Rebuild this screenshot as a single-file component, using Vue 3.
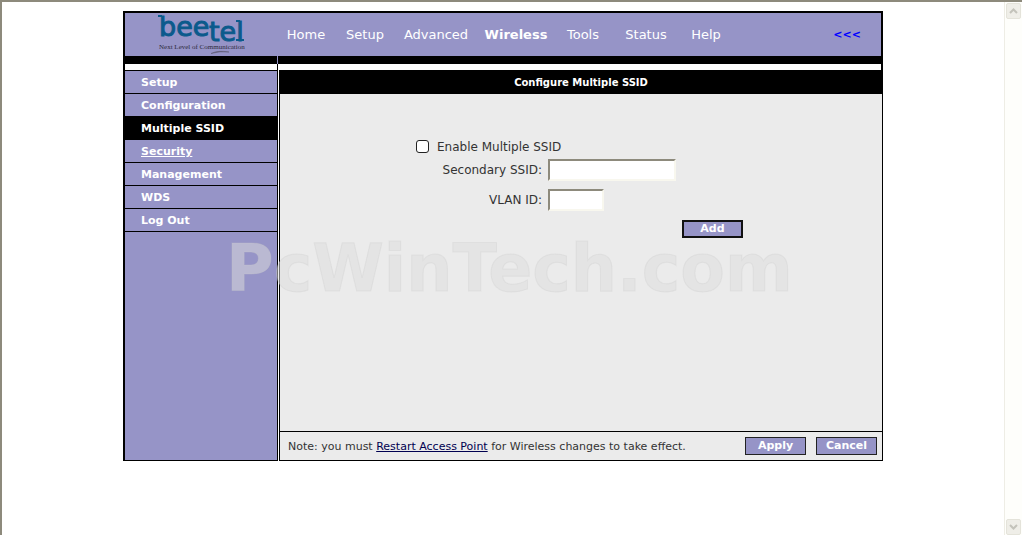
<script setup>
import { ref } from 'vue'

const tabs = ['Home', 'Setup', 'Advanced', 'Wireless', 'Tools', 'Status', 'Help']
const activeTab = 'Wireless'
const sections = ['Setup', 'Configuration', 'Multiple SSID', 'Security', 'Management', 'WDS', 'Log Out']
const activeSection = 'Multiple SSID'
const hoveredSection = 'Security'

const enabled = ref(false)
const ssid = ref('')
const vlan = ref('')
</script>

<template>
  <div class="window">
    <div class="page">
      <div class="router">
        <header class="header">
          <div class="brand">
            <svg class="logo" viewBox="0 0 90 42" role="img" aria-label="beetel, Next Level of Communication">
              <g class="wordmark">
                <text x="1" y="22">bee</text>
                <text x="51" y="27">tel</text>
              </g>
              <g fill="#0b5a8c">
                <rect x="0" y="1" width="4" height="2" />
                <rect x="78" y="6" width="4" height="2" />
                <rect x="78" y="25" width="8" height="2" />
              </g>
              <text class="slogan" x="1" y="35">Next Level of Communication</text>
              <path d="M53 39.500Q60 36 71 38Q61 37 53 39.500Z" fill="#5d5870" stroke="#5d5870" stroke-width=".5" />
            </svg>
          </div>
          <nav class="tabs">
            <a v-for="tab in tabs" :key="tab" href="#" :class="{ active: tab === activeTab }">{{ tab }}</a>
          </nav>
          <a class="back" href="#">&lt;&lt;&lt;</a>
        </header>
        <div class="strip"><span class="strip-mark"></span></div>
        <div class="gap"><span class="gap-mark"></span></div>
        <div class="columns">
          <nav class="side">
            <a
              v-for="item in sections"
              :key="item"
              href="#"
              :class="{ active: item === activeSection, hovered: item === hoveredSection }"
            >{{ item }}</a>
          </nav>
          <main class="main">
            <h1>Configure Multiple SSID</h1>
            <div class="panel">
              <form class="form" @submit.prevent>
                <div class="check">
                  <input id="enable" v-model="enabled" type="checkbox">
                  <label for="enable">Enable Multiple SSID</label>
                </div>
                <div class="field">
                  <label for="ssid">Secondary SSID:</label>
                  <input id="ssid" v-model="ssid" class="long" type="text">
                </div>
                <div class="field">
                  <label for="vlan">VLAN ID:</label>
                  <input id="vlan" v-model="vlan" class="short" type="text">
                </div>
                <button class="btn add" type="submit">Add</button>
              </form>
            </div>
            <footer class="footer">
              <p>Note: you must <a href="#">Restart Access Point</a> for Wireless changes to take effect.</p>
              <button class="btn" type="button">Apply</button>
              <button class="btn" type="button">Cancel</button>
            </footer>
          </main>
        </div>
        <div class="watermark">PcWinTech.com</div>
      </div>
    </div>
    <div class="scrollbar">
      <button type="button" aria-label="Scroll up">
        <svg viewBox="0 0 9 6"><path d="M1 5L4.500 1.500L8 5" /></svg>
      </button>
      <button type="button" aria-label="Scroll down">
        <svg viewBox="0 0 9 6"><path d="M1 1L4.500 4.500L8 1" /></svg>
      </button>
    </div>
  </div>
</template>

<style>
body {
  margin: 0;
  background: #fff;
}
</style>

<style scoped>
* {
  box-sizing: border-box;
}
.window {
  display: flex;
  min-height: 100vh;
  border: solid #8d8a7c;
  border-width: 2px 0 0 2px;
  background: #fff;
  color: #333;
  font-family: Verdana, "DejaVu Sans", sans-serif;
  font-size: 12px;
}
.page {
  flex: 1;
  padding-top: 9px;
}
.router {
  position: relative;
  max-width: 760px;
  margin: 0 auto;
}
.header {
  display: flex;
  align-items: center;
  height: 45px;
  border: 2px solid #000;
  border-bottom: 0;
  background: #9694c7;
}
.brand {
  width: 151px;
  padding-left: 33px;
}
.logo {
  display: block;
  width: 90px;
  height: 42px;
  overflow: visible;
}
.wordmark {
  font-size: 27px;
  fill: #0b5a8c;
  stroke: #0b5a8c;
  stroke-width: 1px;
}
.slogan {
  font-family: "Liberation Serif", serif;
  font-size: 7px;
  fill: #2c2a3c;
}
.tabs {
  display: grid;
  grid-template-columns: 60px 58px 84px 76px 58px 68px 52px;
  font-size: 13px;
  text-align: center;
}
.tabs a {
  color: #fff;
  text-decoration: none;
}
.tabs .active {
  font-weight: bold;
}
.back {
  margin-left: auto;
  margin-right: 20px;
  color: #00f;
  font-size: 11px;
  font-weight: bold;
  text-decoration: none;
}
.strip {
  height: 8px;
  padding-left: 154px;
  background: #000;
}
.strip-mark {
  display: block;
  width: 1px;
  height: 8px;
  background: #9694c7;
}
.gap {
  height: 6px;
  padding-left: 152px;
  border: solid #000;
  border-width: 0 2px;
}
.gap-mark {
  display: block;
  width: 1px;
  height: 6px;
  background: #000;
}
.columns {
  display: flex;
  gap: 1px;
}
.side {
  width: 155px;
  border: 1px solid #000;
  border-left-width: 2px;
  background: #9694c7;
}
.side a {
  display: block;
  height: 23px;
  padding-left: 16px;
  border-bottom: 1px solid #000;
  color: #fff;
  font-size: 11px;
  font-weight: bold;
  line-height: 24px;
  text-decoration: none;
}
.side .active {
  background: #000;
}
.side .hovered {
  text-decoration: underline;
}
.main {
  flex: 1;
  border: 1px solid #000;
  border-top: 0;
  background: #ebebeb;
}
h1 {
  height: 24px;
  margin: 0;
  background: #000;
  color: #fff;
  font-size: 10px;
  line-height: 26px;
  text-align: center;
}
.panel {
  min-height: 337px;
  padding-top: 44px;
}
.form {
  display: flex;
  flex-direction: column;
  max-width: 330px;
  margin: 0 auto;
}
.check {
  display: flex;
  align-items: center;
  gap: 8px;
  height: 17px;
  margin-bottom: 4px;
}
.check input {
  appearance: none;
  width: 13px;
  height: 13px;
  margin: 0;
  border: 1px solid #222;
  border-radius: 3px;
  background: #fff;
}
.field {
  display: grid;
  grid-template-columns: 126px auto;
  justify-content: start;
  align-items: center;
  gap: 6px;
  height: 22px;
  margin-bottom: 8px;
  text-align: right;
}
.field input {
  height: 22px;
  padding: 1px 2px;
  border: 2px solid;
  border-color: #8d8a7c #f8f7ee #f8f7ee #8d8a7c;
  background: #fff;
  font: inherit;
}
.long {
  width: 128px;
}
.short {
  width: 56px;
}
.btn {
  width: 61px;
  height: 18px;
  padding: 0;
  border: 1px solid #222;
  background: #9694c7;
  color: #fff;
  font-family: inherit;
  font-size: 11px;
  font-weight: bold;
  line-height: 16px;
}
.add {
  align-self: flex-end;
  margin: 1px 3px 0 0;
  border: 2px solid #111;
  line-height: 14px;
}
.footer {
  display: flex;
  align-items: center;
  gap: 10px;
  height: 29px;
  padding: 0 5px 0 8px;
  border-top: 1px solid #000;
}
.footer p {
  flex: 1;
  margin: 0;
  font-size: 11px;
}
.footer a {
  color: #000050;
}
.watermark {
  position: absolute;
  top: 222px;
  left: 103px;
  color: rgba(221, 221, 221, 0.5);
  font-size: 65px;
  font-weight: bold;
  line-height: 72px;
  pointer-events: none;
  white-space: nowrap;
  -webkit-text-stroke: 1px rgba(200, 200, 200, 0.25);
}
.scrollbar {
  display: flex;
  flex-direction: column;
  justify-content: space-between;
  width: 18px;
  padding: 1px 1px 0 1px;
  border-left: 1px solid #eeede5;
  background: #fefefb;
}
.scrollbar button {
  display: grid;
  place-items: center;
  width: 15px;
  height: 16px;
  padding: 0;
  border: 1px solid #e4e3da;
  border-radius: 2px;
  background: #efeee8;
}
.scrollbar svg {
  width: 9px;
  height: 6px;
  fill: none;
  stroke: #c4c3bb;
  stroke-width: 2;
}
</style>
